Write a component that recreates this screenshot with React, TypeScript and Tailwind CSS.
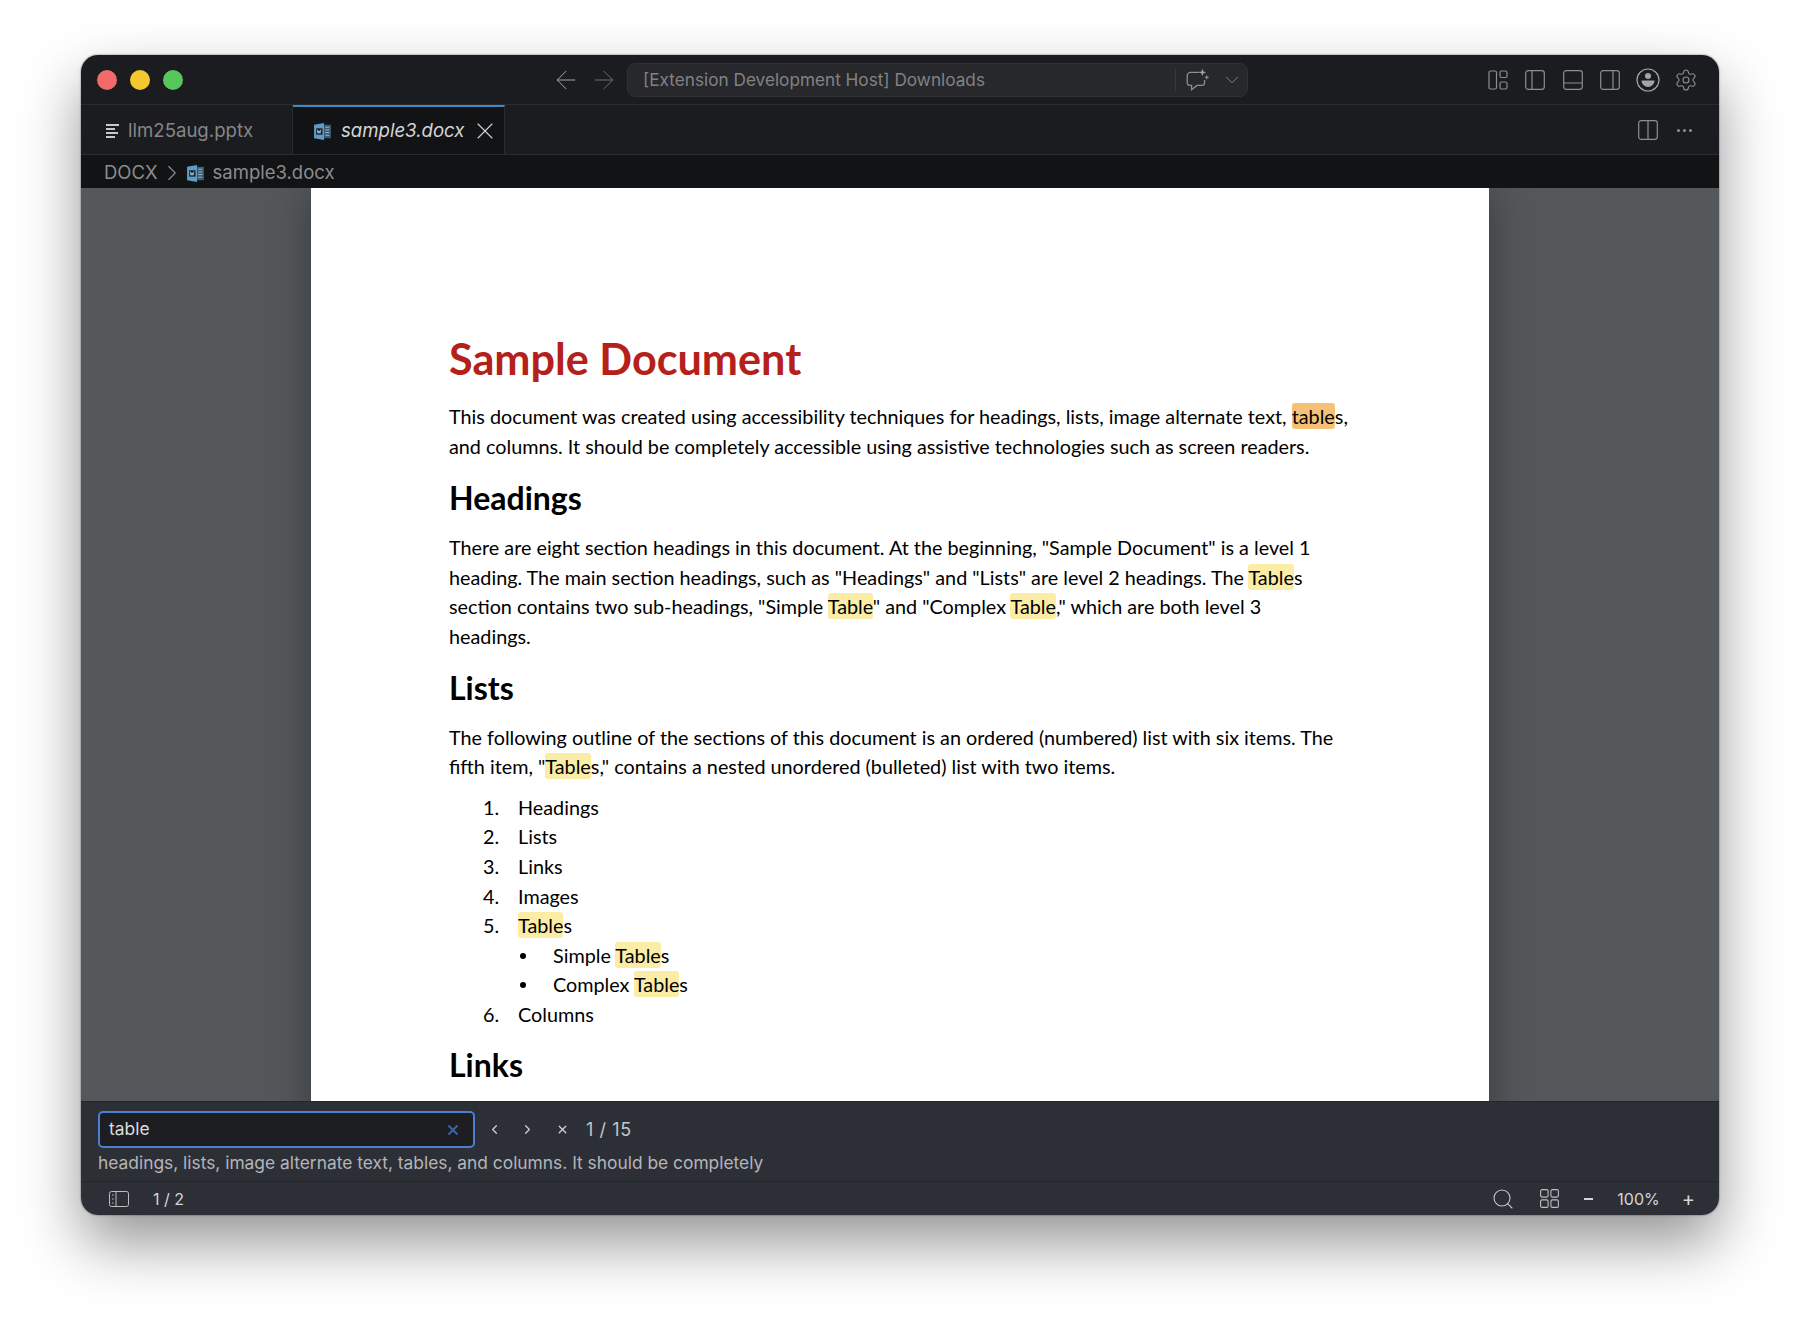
import type { ReactNode } from 'react';
import { ArrowLeft, ArrowRight, ChevronDown, ChevronLeft, ChevronRight, Search, Settings, X } from 'lucide-react';

const uiFont = "font-['Inter','Liberation_Sans',sans-serif]";

function WordIcon({ className }: { className?: string }) {
  return (
    <svg viewBox="0 0 18 18" className={className}>
      <path d="M1 2.500 10.500 1v16L1 15.500z" fill="#5c9dc8" />
      <path d="M10.500 2.500H17v13h-6.500z" fill="#3c5a70" />
      <path d="M11.500 5h4M11.500 7.500h4M11.500 10h4M11.500 12.500h4" stroke="#8fb3cb" strokeWidth="1" />
      <rect x="3" y="6" width="6" height="6" fill="#12202c" />
      <path d="m4 7.300.8 3.400.9-2.400.9 2.400.8-3.400" fill="none" stroke="#dbe9f2" strokeWidth="0.7" />
    </svg>
  );
}

function LayoutIcon({ children }: { children: ReactNode }) {
  return (
    <svg viewBox="0 0 20 20" fill="none" stroke="#8d8e90" strokeWidth="1.2" className="h-5 w-5">
      {children}
    </svg>
  );
}

function Highlight({ children, active }: { children: ReactNode; active?: boolean }) {
  return (
    <span className={`rounded-[3px] py-[1px] ${active ? 'bg-[#f6c177]' : 'bg-[#fbeca6]'}`}>{children}</span>
  );
}

function NumberedItem({ n, children }: { n: number; children: ReactNode }) {
  return (
    <li className="flex">
      <span className="w-[35px] shrink-0">{n}.</span>
      <span>{children}</span>
    </li>
  );
}

function BulletItem({ children }: { children: ReactNode }) {
  return (
    <li className="flex pl-[35px]">
      <span className="flex w-[35px] shrink-0 items-center">
        <span className="ml-[2px] h-[6px] w-[6px] rounded-full bg-black" />
      </span>
      <span>{children}</span>
    </li>
  );
}

export default function App() {
  return (
    <div className={`h-[1323px] w-[1800px] overflow-hidden bg-white pl-[81px] pt-[55px] ${uiFont}`}>
      <div className="flex h-[1160px] w-[1638px] flex-col overflow-hidden rounded-[17px] shadow-[0_28px_60px_rgba(0,0,0,0.42),0_0_2px_rgba(0,0,0,0.6)]">
        {/* title bar */}
        <div className="relative flex h-[50px] shrink-0 items-center border-b border-[#2a2b2e] bg-[#1b1c1f]">
          <div className="ml-[16px] flex gap-[13px]">
            <span className="h-5 w-5 rounded-full bg-[#f26a69]" />
            <span className="h-5 w-5 rounded-full bg-[#f5c92d]" />
            <span className="h-5 w-5 rounded-full bg-[#57c75c]" />
          </div>
          <ArrowLeft className="ml-[368px] h-[30px] w-[30px] text-[#a4a5a7]" strokeWidth={0.8} />
          <ArrowRight className="ml-[8px] h-[30px] w-[30px] text-[#6d6e70]" strokeWidth={0.8} />
          <div className="ml-[8px] flex h-[34px] w-[621px] items-center rounded-[8px] border border-[#303135] bg-[#27282b] pl-[15px]">
            <span className="w-[532px] text-[17.2px] text-[#818284]">[Extension Development Host] Downloads</span>
            <span className="h-[22px] w-px bg-[#37383b]" />
            <svg viewBox="0 0 24 24" fill="none" stroke="#8d8e90" strokeWidth="1.2" className="ml-[8px] h-[26px] w-[26px]">
              <path d="M14 5H6a3 3 0 0 0-3 3v6a3 3 0 0 0 3 3h1v4l5-4h4a3 3 0 0 0 3-3v-2" />
              <path d="m17 2 .8 2.200 2.200.8-2.200.8-.8 2.200-.8-2.200-2.200-.8 2.200-.8z" fill="#a4a5a7" strokeWidth="0.4" />
              <path d="m21 7.500.5 1.500 1.500.5-1.500.5-.5 1.500-.5-1.500-1.500-.5 1.500-.5z" fill="#a4a5a7" strokeWidth="0.3" />
            </svg>
            <ChevronDown className="ml-[11px] h-[22px] w-[22px] text-[#8d8e90]" strokeWidth={1} />
          </div>
          <div className="absolute right-[21px] top-[13px] flex items-center">
            <LayoutIcon>
              <rect x="1" y="1" width="7.500" height="18" rx="1.500" />
              <rect x="12" y="1" width="7" height="6.500" rx="1.500" />
              <rect x="12" y="12" width="7" height="7" rx="1.500" />
            </LayoutIcon>
            <span className="ml-[17px]">
              <LayoutIcon>
                <rect x="0.700" y="0.700" width="18.600" height="18.600" rx="2.500" />
                <path d="M7 1v18" />
              </LayoutIcon>
            </span>
            <span className="ml-[18px]">
              <LayoutIcon>
                <rect x="0.700" y="0.700" width="18.600" height="18.600" rx="2.500" />
                <path d="M1 13h18" />
              </LayoutIcon>
            </span>
            <span className="ml-[17px]">
              <LayoutIcon>
                <rect x="0.700" y="0.700" width="18.600" height="18.600" rx="2.500" />
                <path d="M13 1v18" />
              </LayoutIcon>
            </span>
            <svg viewBox="0 0 24 24" className="ml-[16px] h-6 w-6" fill="none">
              <circle cx="12" cy="12" r="11" stroke="#a3a4a6" strokeWidth="1.200" />
              <circle cx="12" cy="8" r="3" fill="#a3a4a6" />
              <path d="M5.500 12.500h13a6.500 6.500 0 0 1-13 0z" fill="#a3a4a6" />
            </svg>
            <Settings className="ml-[14px] h-[24px] w-[24px] text-[#8d8e90]" strokeWidth={1.1} />
          </div>
        </div>

        {/* tabs */}
        <div className="relative flex h-[50px] shrink-0 border-b border-[#2a2b2e] bg-[#1b1c1f]">
          <div className="flex w-[212px] items-center border-r border-[#2a2b2e] pl-[25px] pt-[3px]">
            <span className="flex w-[13px] flex-col gap-[2px]">
              <span className="h-[2px] w-[13px] bg-[#c7c8c9]" />
              <span className="h-[2px] w-[9px] bg-[#c7c8c9]" />
              <span className="h-[2px] w-[12px] bg-[#c7c8c9]" />
              <span className="h-[2px] w-[9px] bg-[#c7c8c9]" />
            </span>
            <span className="ml-[9px] text-[18.600px] text-[#858688]">llm25aug.pptx</span>
          </div>
          <div className="flex w-[212px] items-center border-r border-t-2 border-[#2a2b2e] border-t-[#3f88c5] bg-[#121315] pl-[20px] pt-[1px]">
            <WordIcon className="h-[19px] w-[19px]" />
            <span className="ml-[9px] text-[18.600px] italic text-[#d4d4d5]">sample3.docx</span>
            <X className="ml-[7px] h-[28px] w-[28px] text-[#d4d4d5]" strokeWidth={0.95} />
          </div>
          <div className="absolute right-[27px] top-[15px] flex items-center">
            <LayoutIcon>
              <rect x="0.700" y="0.700" width="18.600" height="18.600" rx="2.500" />
              <path d="M10 1v18" />
            </LayoutIcon>
            <span className="ml-[19px] flex gap-[3px]">
              <span className="h-[3px] w-[3px] rounded-full bg-[#8d8e90]" />
              <span className="h-[3px] w-[3px] rounded-full bg-[#8d8e90]" />
              <span className="h-[3px] w-[3px] rounded-full bg-[#8d8e90]" />
            </span>
          </div>
        </div>

        {/* breadcrumb */}
        <div className="flex h-[33px] shrink-0 items-center bg-[#121315] pl-[23px] pt-[3px] text-[18.500px] text-[#8b8c8e]">
          <span>DOCX</span>
          <ChevronRight className="ml-[1px] h-[26px] w-[26px]" strokeWidth={1} />
          <WordIcon className="ml-[1px] h-[19px] w-[19px]" />
          <span className="ml-[8px]">sample3.docx</span>
        </div>

        {/* document */}
        <div className="flex min-h-0 flex-1 justify-center overflow-hidden bg-[#54585b]">
          <div className="h-[1400px] w-[1178px] shrink-0 bg-white pl-[138px] pt-[146px] text-[19.800px] leading-[29.600px] text-black shadow-[0_0_40px_rgba(0,0,0,0.35)] font-['Lato',sans-serif]">
            <h1 className="mb-[20px] text-[43.200px] font-bold leading-[48px] text-[#b5201a]">Sample Document</h1>
            <p>
              This document was created using accessibility techniques for headings, lists, image alternate text, <Highlight active>table</Highlight>s,
              <br />
              and columns. It should be completely accessible using assistive technologies such as screen readers.
            </p>
            <h2 className="mb-[15px] mt-[17px] text-[32px] font-bold leading-[40px]">Headings</h2>
            <p>
              There are eight section headings in this document. At the beginning, "Sample Document" is a level 1
              <br />
              heading. The main section headings, such as "Headings" and "Lists" are level 2 headings. The <Highlight>Table</Highlight>s
              <br />
              section contains two sub-headings, "Simple <Highlight>Table</Highlight>" and "Complex <Highlight>Table</Highlight>," which are both level 3
              <br />
              headings.
            </p>
            <h2 className="mb-[15px] mt-[16px] text-[32px] font-bold leading-[40px]">Lists</h2>
            <p>
              The following outline of the sections of this document is an ordered (numbered) list with six items. The
              <br />
              fifth item, "<Highlight>Table</Highlight>s," contains a nested unordered (bulleted) list with two items.
            </p>
            <ol className="mt-[11px] pl-[34px]">
              <NumberedItem n={1}>Headings</NumberedItem>
              <NumberedItem n={2}>Lists</NumberedItem>
              <NumberedItem n={3}>Links</NumberedItem>
              <NumberedItem n={4}>Images</NumberedItem>
              <NumberedItem n={5}><Highlight>Table</Highlight>s</NumberedItem>
              <BulletItem>Simple <Highlight>Table</Highlight>s</BulletItem>
              <BulletItem>Complex <Highlight>Table</Highlight>s</BulletItem>
              <NumberedItem n={6}>Columns</NumberedItem>
            </ol>
            <h2 className="mt-[15px] text-[32px] font-bold leading-[40px]">Links</h2>
          </div>
        </div>

        {/* find bar */}
        <div className="flex h-[80px] shrink-0 flex-col border-t border-[#24262b] bg-[#2c2f36] pl-[17px] pt-[9px]">
          <div className="flex items-center">
            <div className="flex h-[37px] w-[377px] items-center justify-between rounded-[5px] border-2 border-[#4c7fd1] bg-[#1d1e22] pl-[9px] pr-[12px] text-[17.400px] text-[#dcdcdd]">
              <span>table</span>
              <X className="h-[16px] w-[16px] text-[#3f62a8]" strokeWidth={3} />
            </div>
            <ChevronLeft className="ml-[12px] h-[15px] w-[15px] text-[#d0d1d3]" strokeWidth={2} />
            <ChevronRight className="ml-[18px] h-[15px] w-[15px] text-[#d0d1d3]" strokeWidth={2} />
            <X className="ml-[21px] h-[13px] w-[13px] text-[#d0d1d3]" strokeWidth={2.5} />
            <span className="ml-[17px] text-[18px] tracking-[0.6px] text-[#c4c5c8]">1 / 15</span>
          </div>
          <div className="mt-[2px] text-[17.360px] text-[#b4b5b8]">headings, lists, image alternate text, tables, and columns. It should be completely</div>
        </div>

        {/* status bar */}
        <div className="flex h-[34px] shrink-0 items-center justify-between border-t border-[#23252a] bg-[#2c2f36] pl-[28px] pr-[24px] text-[16px] text-[#d4d5d7]">
          <div className="flex items-center">
            <svg viewBox="0 0 20 16" fill="none" stroke="#bdbec0" strokeWidth="1" className="h-[16px] w-[20px]">
              <rect x="0.500" y="0.500" width="19" height="15" rx="2" />
              <path d="M7 1v14" />
              <path d="M3 4h1.500M3 8h1.500M3 12h1.500" strokeWidth="1.200" />
            </svg>
            <span className="ml-[24px]">1 / 2</span>
          </div>
          <div className="flex items-center">
            <Search className="h-[24px] w-[24px] text-[#c6c7c9]" strokeWidth={1.1} />
            <svg viewBox="0 0 19 19" fill="none" stroke="#bdbec0" strokeWidth="1.100" className="ml-[25px] h-[19px] w-[19px]">
              <rect x="0.600" y="0.600" width="7.500" height="7.500" rx="1.500" />
              <rect x="10.900" y="0.600" width="7.500" height="7.500" rx="1.500" />
              <rect x="0.600" y="10.900" width="7.500" height="7.500" rx="1.500" />
              <rect x="10.900" y="10.900" width="7.500" height="7.500" rx="1.500" />
            </svg>
            <span className="ml-[25px] h-[2px] w-[9px] bg-[#d4d5d7]" />
            <span className="ml-[24px]">100%</span>
            <span className="ml-[22px] text-[20px] leading-none">+</span>
          </div>
        </div>
      </div>
    </div>
  );
}
